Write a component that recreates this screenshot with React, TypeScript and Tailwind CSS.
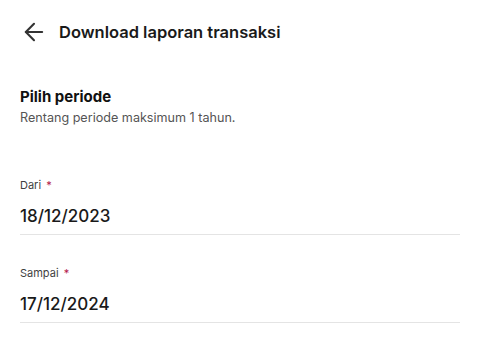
import { ArrowLeft } from 'lucide-react';

function DateField({ label, value }: { label: string; value: string }) {
  return (
    <div className="mr-5">
      <p className="text-[11px] text-[#3f3f3f] leading-[14px]">
        {label} <span className="text-[#b3174a] ml-0.5">*</span>
      </p>
      <div className="pt-[13px] pb-[7px] border-b border-[#e4e4e4]">
        <p className="text-[17px] font-medium text-[#1a1a1a] leading-[22px]">{value}</p>
      </div>
    </div>
  );
}

export default function App() {
  return (
    <div
      className="w-[480px] h-[360px] bg-white overflow-hidden"
      style={{ fontFamily: 'Inter, "Noto Sans", sans-serif' }}
    >
      {/* Header */}
      <div className="flex items-center h-[64px] pl-[20px]">
        <ArrowLeft className="w-[28px] h-[28px] text-[#333] shrink-0" strokeWidth={1.8} />
        <h1 className="ml-[11px] text-[16.5px] font-semibold text-[#1a1a1a]">
          Download laporan transaksi
        </h1>
      </div>

      <div className="pl-5 pt-[23px]">
        <h2 className="text-[15px] font-bold text-[#111] leading-[20px]">Pilih periode</h2>
        <p className="text-[12.6px] text-[#555] leading-[18px] mt-[2px]">
          Rentang periode maksimum 1 tahun.
        </p>

        <div className="mt-[51px] flex flex-col gap-[31px]">
          <DateField label="Dari" value="18/12/2023" />
          <DateField label="Sampai" value="17/12/2024" />
        </div>
      </div>
    </div>
  );
}
